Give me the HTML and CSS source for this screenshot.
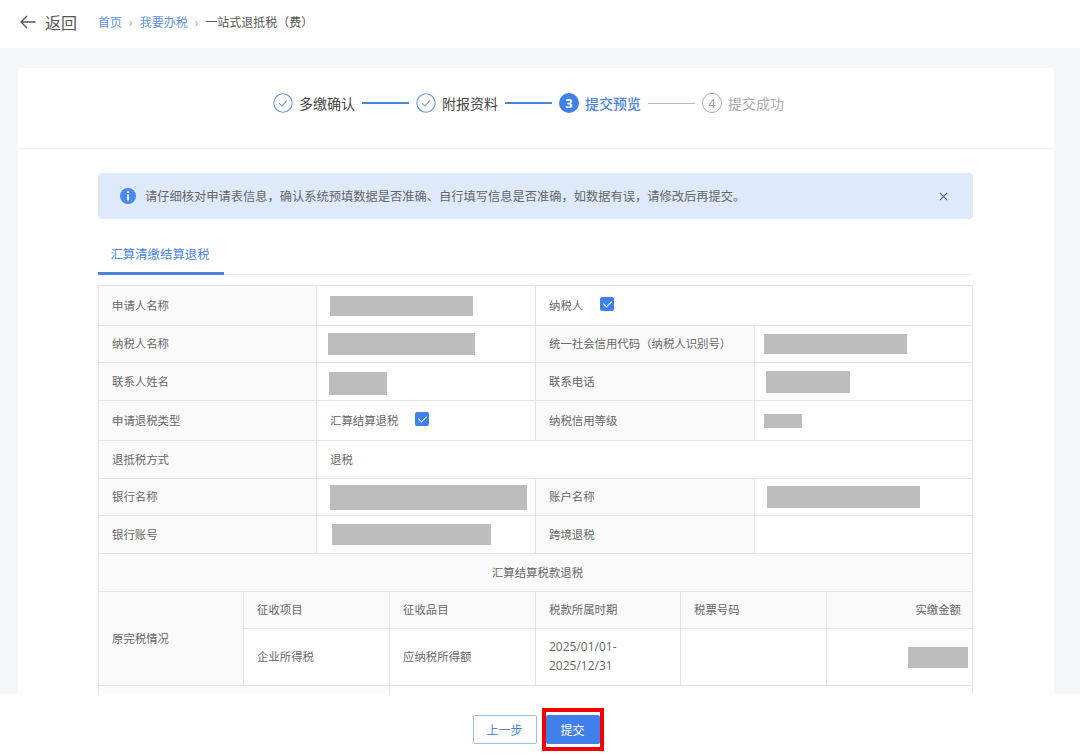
FILE: index.html
```html
<!DOCTYPE html>
<html lang="zh-CN">

<head>
    <meta charset="UTF-8">
    <meta name="viewport" content="width=device-width, initial-scale=1.0">
    <title>一站式退抵税（费）</title>
    <link rel="stylesheet" href="styles.css">
</head>

<body>
    <header class="topBar">
        <svg class="backIcon" viewBox="0 0 16 14" width="16" height="14">
            <path d="M15.5 7H1M7 1 1 7l6 6" fill="none" stroke="#555" stroke-width="1.3" />
        </svg>
        <span class="backText">返回</span>
        <nav class="crumbs">
            <a href="#">首页</a>
            <span class="crumbSep">›</span>
            <a href="#">我要办税</a>
            <span class="crumbSep">›</span>
            <span>一站式退抵税（费）</span>
        </nav>
    </header>

    <main class="mainArea">
        <div class="card">
            <div class="steps">
                <svg class="stepIcon" viewBox="0 0 20 20" width="20" height="20">
                    <circle cx="10" cy="10" r="9.2" fill="none" stroke="#6f9bdc" stroke-width="1.1" />
                    <path d="M6 10.2 9 13l5-5.6" fill="none" stroke="#6f9bdc" stroke-width="1.1" />
                </svg>
                <span class="stepText">多缴确认</span>
                <span class="stepLine"></span>
                <svg class="stepIcon" viewBox="0 0 20 20" width="20" height="20">
                    <circle cx="10" cy="10" r="9.2" fill="none" stroke="#6f9bdc" stroke-width="1.1" />
                    <path d="M6 10.2 9 13l5-5.6" fill="none" stroke="#6f9bdc" stroke-width="1.1" />
                </svg>
                <span class="stepText">附报资料</span>
                <span class="stepLine"></span>
                <span class="stepNum stepNumActive">3</span>
                <span class="stepText stepTextActive">提交预览</span>
                <span class="stepLine stepLineTodo"></span>
                <span class="stepNum stepNumTodo">4</span>
                <span class="stepText stepTextTodo">提交成功</span>
            </div>

            <div class="cardBody">
                <div class="notice">
                    <svg class="noticeIcon" viewBox="0 0 16 16" width="16" height="16">
                        <circle cx="8" cy="8" r="8" fill="#4a8af0" />
                        <rect x="7.1" y="3.2" width="1.8" height="1.8" fill="#fff" />
                        <rect x="7.1" y="6.2" width="1.8" height="6.4" fill="#fff" />
                    </svg>
                    <span class="noticeText">请仔细核对申请表信息，确认系统预填数据是否准确、自行填写信息是否准确，如数据有误，请修改后再提交。</span>
                    <svg class="noticeClose" viewBox="0 0 10 10" width="9" height="9">
                        <path d="M1 1l8 8M9 1 1 9" fill="none" stroke="#5d6675" stroke-width="1.4" />
                    </svg>
                </div>

                <div class="tabs">
                    <span class="tabItem">汇算清缴结算退税</span>
                </div>

                <table class="infoTable">
                    <colgroup>
                        <col class="colA">
                        <col class="colB">
                        <col class="colB">
                        <col class="colC">
                        <col class="colD">
                        <col class="colE">
                        <col class="colF">
                        <col class="colC">
                    </colgroup>
                    <tr class="rowA">
                        <td class="lbl" colspan="2">申请人名称</td>
                        <td colspan="2"><span class="mask maskName"></span></td>
                        <td colspan="4">纳税人<span class="checkBox"></span></td>
                    </tr>
                    <tr class="rowB">
                        <td class="lbl" colspan="2">纳税人名称</td>
                        <td colspan="2"><span class="mask maskTaxpayer"></span></td>
                        <td class="lbl" colspan="2">统一社会信用代码（纳税人识别号）</td>
                        <td colspan="2"><span class="mask maskCode"></span></td>
                    </tr>
                    <tr class="rowC">
                        <td class="lbl" colspan="2">联系人姓名</td>
                        <td colspan="2"><span class="mask maskContact"></span></td>
                        <td class="lbl" colspan="2">联系电话</td>
                        <td colspan="2"><span class="mask maskPhone"></span></td>
                    </tr>
                    <tr class="rowA">
                        <td class="lbl" colspan="2">申请退税类型</td>
                        <td colspan="2">汇算结算退税<span class="checkBox"></span></td>
                        <td class="lbl" colspan="2">纳税信用等级</td>
                        <td colspan="2"><span class="mask maskLevel"></span></td>
                    </tr>
                    <tr class="rowC">
                        <td class="lbl" colspan="2">退抵税方式</td>
                        <td colspan="6">退税</td>
                    </tr>
                    <tr class="rowB">
                        <td class="lbl" colspan="2">银行名称</td>
                        <td colspan="2"><span class="mask maskBank"></span></td>
                        <td class="lbl" colspan="2">账户名称</td>
                        <td colspan="2"><span class="mask maskAccount"></span></td>
                    </tr>
                    <tr class="rowC">
                        <td class="lbl" colspan="2">银行账号</td>
                        <td colspan="2"><span class="mask maskCard"></span></td>
                        <td class="lbl" colspan="2">跨境退税</td>
                        <td colspan="2"></td>
                    </tr>
                    <tr class="rowC">
                        <td class="lbl center" colspan="8">汇算结算税款退税</td>
                    </tr>
                    <tr class="rowB">
                        <td class="lbl" rowspan="2">原完税情况</td>
                        <td class="lbl" colspan="2">征收项目</td>
                        <td class="lbl">征收品目</td>
                        <td class="lbl">税款所属时期</td>
                        <td class="lbl" colspan="2">税票号码</td>
                        <td class="lbl right">实缴金额</td>
                    </tr>
                    <tr class="rowD">
                        <td colspan="2">企业所得税</td>
                        <td>应纳税所得额</td>
                        <td class="dateCell">2025/01/01-<br>2025/12/31</td>
                        <td colspan="2"></td>
                        <td class="right amountCell"><span class="mask maskAmount"></span></td>
                    </tr>
                    <tr class="rowA">
                        <td class="lbl" colspan="3"></td>
                        <td colspan="5"></td>
                    </tr>
                </table>
            </div>
        </div>
    </main>

    <footer class="actions">
        <button class="btn btnPlain">上一步</button>
        <span class="redBox">
            <button class="btn btnMain">提交</button>
        </span>
    </footer>
</body>

</html>
```

FILE: styles.css
```css
* {
    margin: 0px;
    padding: 0px;
    box-sizing: border-box;
    font-family: "Open Sans", "Noto Sans CJK SC", sans-serif;
}

body {
    height: 755px;
    display: flex;
    flex-direction: column;
    overflow: hidden;
    background-color: #f5f7fa;
    color: #666;
}

.topBar {
    height: 48px;
    flex: none;
    display: flex;
    align-items: center;
    padding: 0px 0px 4px 20px;
    background-color: #fff;
}

.backIcon {
    margin-right: 9px;
}

.backText {
    font-size: 16px;
    color: #555;
    margin-right: 21px;
}

.crumbs {
    display: flex;
    align-items: center;
    font-size: 12px;
    color: #555;
}

.crumbs a {
    color: #5b8fe0;
    text-decoration: none;
}

.crumbSep {
    color: #aaa;
    margin: 0px 7px;
}

.mainArea {
    flex: 1;
    min-height: 0;
    overflow: hidden;
    padding: 20px 26px 0px 18px;
}

.card {
    background-color: #fff;
    border-radius: 4px;
}

.steps {
    height: 81px;
    display: flex;
    justify-content: center;
    align-items: center;
    border-bottom: 1px solid #f0f0f0;
    padding: 0px 15px 10px 0px;
}

.stepText {
    font-size: 14px;
    color: #444;
    margin: 0px 7px 0px 6px;
}

.stepTextActive {
    color: #4a84e0;
    font-weight: 500;
}

.stepTextTodo {
    color: #aaa;
}

.stepLine {
    width: 47px;
    height: 2px;
    background-color: #4a84d8;
}

.stepLineTodo {
    height: 1px;
    background-color: #bbb;
}

.stepIcon {
    margin-left: 7px;
}

.stepNum {
    width: 20px;
    height: 20px;
    margin-left: 7px;
    border-radius: 50%;
    display: flex;
    justify-content: center;
    align-items: center;
    font-size: 13px;
}

.stepNumActive {
    background-color: #3f80ea;
    color: #fff;
    font-weight: 700;
}

.stepNumTodo {
    border: 1px solid #aaa;
    color: #999;
}

.cardBody {
    padding: 24px 81px 0px 80px;
}

.notice {
    height: 46px;
    display: flex;
    align-items: center;
    padding: 0px 25px 0px 22px;
    background-color: #dfe9fc;
    border-radius: 4px;
}

.noticeText {
    flex: 1;
    margin-left: 9px;
    font-size: 12.25px;
    color: #666;
}

.tabs {
    height: 40px;
    margin-top: 16px;
    border-bottom: 1px solid #eee;
}

.tabItem {
    display: block;
    width: 126px;
    height: 40px;
    line-height: 39px;
    padding-right: 2px;
    text-align: center;
    font-size: 12.4px;
    color: #4a84e0;
    border-bottom: 3px solid #4a84e0;
}

.infoTable {
    width: 874px;
    margin-top: 10px;
    table-layout: fixed;
    border-collapse: collapse;
    font-size: 11.4px;
    color: #666;
}

.colA {
    width: 145px;
}

.colB {
    width: 73px;
}

.colC {
    width: 146px;
}

.colD {
    width: 145px;
}

.colE {
    width: 74px;
}

.colF {
    width: 72px;
}

.infoTable td {
    border: 1px solid #e4e4e4;
    padding: 0px 13px 2px;
    vertical-align: middle;
}

.rowA td {
    height: 40px;
}

.rowB td {
    height: 37px;
}

.rowC td {
    height: 38px;
}

.rowD td {
    height: 57px;
}

.infoTable .lbl {
    background-color: #fafafa;
}

.infoTable .center {
    text-align: center;
    padding-left: 17px;
}

.infoTable .right {
    text-align: right;
    padding-right: 11px;
}

.infoTable .amountCell {
    padding-right: 4px;
}

.dateCell {
    font-size: 12px;
    line-height: 19px;
}

.checkBox {
    display: inline-block;
    position: relative;
    width: 14px;
    height: 14px;
    margin-left: 17px;
    vertical-align: -1px;
    border-radius: 2px;
    background-color: #3f80ea;
}

.checkBox::after {
    content: "";
    position: absolute;
    left: 4.5px;
    top: 2px;
    width: 4px;
    height: 7px;
    border: solid #fff;
    border-width: 0px 1.5px 1.5px 0px;
    transform: rotate(45deg);
}

.mask {
    display: block;
    margin-top: 2px;
    background-color: #bdbdbd;
}

.maskName {
    width: 143px;
    height: 20px;
}

.maskTaxpayer {
    width: 147px;
    height: 22px;
    margin-left: -2px;
}

.maskCode {
    width: 143px;
    height: 20px;
    margin-left: -4px;
}

.maskContact {
    width: 58px;
    height: 23px;
    margin-left: -1px;
    margin-top: 6px;
}

.maskPhone {
    width: 84px;
    height: 22px;
    margin-left: -2px;
}

.maskLevel {
    width: 38px;
    height: 14px;
    margin-left: -4px;
}

.maskBank {
    width: 197px;
    height: 25px;
    margin-top: 3px;
}

.maskAccount {
    width: 153px;
    height: 22px;
    margin-left: -1px;
}

.maskCard {
    width: 159px;
    height: 21px;
    margin-left: 2px;
}

.maskAmount {
    width: 60px;
    height: 21px;
    margin-left: auto;
}

.actions {
    height: 61px;
    flex: none;
    display: flex;
    justify-content: center;
    align-items: center;
    gap: 5px;
    padding: 10px 4px 0px 0px;
    background-color: #fff;
}

.btn {
    height: 29px;
    border-radius: 2px;
    font-size: 12px;
}

.btnPlain {
    width: 64px;
    background-color: #fff;
    border: 1px solid #9dbdec;
    color: #4a84e0;
}

.btnMain {
    display: block;
    width: 54px;
    background-color: #3f80ea;
    border: none;
    color: #fff;
}

.redBox {
    display: block;
    padding: 3px 0px;
    border: 4px solid #f40000;
}
```
